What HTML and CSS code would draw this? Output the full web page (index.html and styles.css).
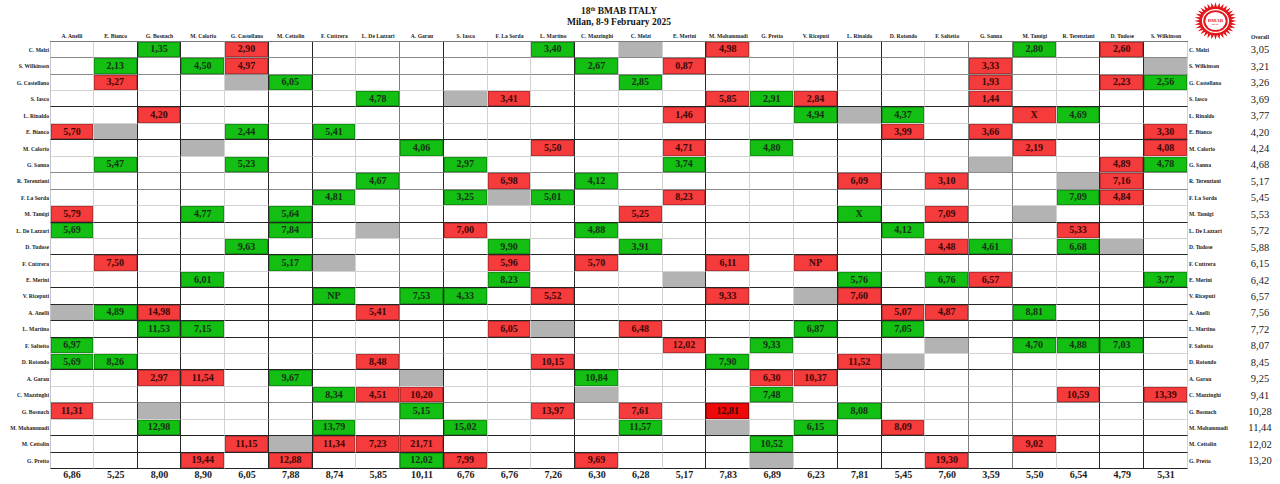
FILE: index.html
```html
<!DOCTYPE html>
<html lang="it">
<head>
<meta charset="utf-8">
<title>18th BMAB ITALY</title>
<link rel="stylesheet" href="styles.css">
</head>
<body>
<div class="top">
  <div class="top-pad"></div>
  <div class="title">
    <div>18<sup>th</sup> BMAB ITALY</div>
    <div>Milan, 8-9 February 2025</div>
  </div>
  <div class="logo-box">
    <svg class="logo" viewBox="0 0 42 42" preserveAspectRatio="none">
      <defs><polygon id="t" points="21,0.3 22.7,6.5 19.3,6.5"/></defs>
      <g fill="#e3161c">
        <use href="#t"/><use href="#t" transform="rotate(11.25 21 21)"/><use href="#t" transform="rotate(22.5 21 21)"/><use href="#t" transform="rotate(33.75 21 21)"/>
        <use href="#t" transform="rotate(45 21 21)"/><use href="#t" transform="rotate(56.25 21 21)"/><use href="#t" transform="rotate(67.5 21 21)"/><use href="#t" transform="rotate(78.75 21 21)"/>
        <use href="#t" transform="rotate(90 21 21)"/><use href="#t" transform="rotate(101.25 21 21)"/><use href="#t" transform="rotate(112.5 21 21)"/><use href="#t" transform="rotate(123.75 21 21)"/>
        <use href="#t" transform="rotate(135 21 21)"/><use href="#t" transform="rotate(146.25 21 21)"/><use href="#t" transform="rotate(157.5 21 21)"/><use href="#t" transform="rotate(168.75 21 21)"/>
        <use href="#t" transform="rotate(180 21 21)"/><use href="#t" transform="rotate(191.25 21 21)"/><use href="#t" transform="rotate(202.5 21 21)"/><use href="#t" transform="rotate(213.75 21 21)"/>
        <use href="#t" transform="rotate(225 21 21)"/><use href="#t" transform="rotate(236.25 21 21)"/><use href="#t" transform="rotate(247.5 21 21)"/><use href="#t" transform="rotate(258.75 21 21)"/>
        <use href="#t" transform="rotate(270 21 21)"/><use href="#t" transform="rotate(281.25 21 21)"/><use href="#t" transform="rotate(292.5 21 21)"/><use href="#t" transform="rotate(303.75 21 21)"/>
        <use href="#t" transform="rotate(315 21 21)"/><use href="#t" transform="rotate(326.25 21 21)"/><use href="#t" transform="rotate(337.5 21 21)"/><use href="#t" transform="rotate(348.75 21 21)"/>
        <circle cx="21" cy="21" r="15.8"/>
      </g>
      <circle cx="21" cy="21" r="12.6" fill="none" stroke="#fff" stroke-width="1.3"/>
      <circle cx="21" cy="21" r="10" fill="#fff"/>
      <text x="21" y="21.6" text-anchor="middle" class="lg1">BMAB</text>
      <text x="21" y="25.6" text-anchor="middle" class="lg2">ITALY</text>
    </svg>
  </div>
</div>
<table class="grid">
<colgroup>
<col class="c-lab">
<col class="c-d"><col class="c-d"><col class="c-d"><col class="c-d"><col class="c-d"><col class="c-d"><col class="c-d"><col class="c-d"><col class="c-d"><col class="c-d"><col class="c-d"><col class="c-d"><col class="c-d">
<col class="c-d"><col class="c-d"><col class="c-d"><col class="c-d"><col class="c-d"><col class="c-d"><col class="c-d"><col class="c-d"><col class="c-d"><col class="c-d"><col class="c-d"><col class="c-d"><col class="c-d">
<col class="c-rl"><col class="c-ov">
</colgroup>
<thead>
<tr><th></th><th class="h">A. Anelli</th><th class="h">E. Bianco</th><th class="h">G. Bosnach</th><th class="h">M. Calorio</th><th class="h">G. Castellano</th><th class="h">M. Cettolin</th><th class="h">F. Cuttrera</th><th class="h">L. De Lazzari</th><th class="h">A. Garau</th><th class="h">S. Iasco</th><th class="h">F. La Sorda</th><th class="h">L. Martino</th><th class="h">C. Mazzinghi</th><th class="h">C. Melzi</th><th class="h">E. Merini</th><th class="h">M. Mohammadi</th><th class="h">G. Pretto</th><th class="h">V. Riceputi</th><th class="h">L. Rinaldo</th><th class="h">D. Rotondo</th><th class="h">F. Saltetto</th><th class="h">G. Sanna</th><th class="h">M. Tamigi</th><th class="h">R. Terenziani</th><th class="h">D. Tudose</th><th class="h">S. Wilkinson</th><th></th><th class="ovh">Overall</th></tr>
</thead>
<tbody>
<tr class="m"><th class="nm">C. Melzi</th>
<td></td><td></td><td class="g">1,35</td><td></td><td class="r">2,90</td>
<td></td><td></td><td></td><td></td><td></td>
<td></td><td class="g">3,40</td><td></td><td class="s"></td><td></td>
<td class="r">4,98</td><td></td><td></td><td></td><td></td>
<td></td><td></td><td class="g">2,80</td><td></td><td class="r">2,60</td><td></td>
<th class="rl">C. Melzi</th><th class="ov">3,05</th></tr>
<tr class="m"><th class="nm">S. Wilkinson</th>
<td></td><td class="g">2,13</td><td></td><td class="g">4,50</td><td class="r">4,97</td>
<td></td><td></td><td></td><td></td><td></td>
<td></td><td></td><td class="g">2,67</td><td></td><td class="r">0,87</td>
<td></td><td></td><td></td><td></td><td></td>
<td></td><td class="r">3,33</td><td></td><td></td><td></td><td class="s"></td>
<th class="rl">S. Wilkinson</th><th class="ov">3,21</th></tr>
<tr><th class="nm">G. Castellano</th>
<td></td><td class="r">3,27</td><td></td><td></td><td class="s"></td>
<td class="g">6,05</td><td></td><td></td><td></td><td></td>
<td></td><td></td><td></td><td class="g">2,85</td><td></td>
<td></td><td></td><td></td><td></td><td></td>
<td></td><td class="r">1,93</td><td></td><td></td><td class="r">2,23</td><td class="g">2,56</td>
<th class="rl">G. Castellano</th><th class="ov">3,26</th></tr>
<tr class="d"><th class="nm">S. Iasco</th>
<td></td><td></td><td></td><td></td><td></td>
<td></td><td></td><td class="g">4,78</td><td></td><td class="s"></td>
<td class="r">3,41</td><td></td><td></td><td></td><td></td>
<td class="r">5,85</td><td class="g">2,91</td><td class="r">2,84</td><td></td><td></td>
<td></td><td class="r">1,44</td><td></td><td></td><td></td><td></td>
<th class="rl">S. Iasco</th><th class="ov">3,69</th></tr>
<tr><th class="nm">L. Rinaldo</th>
<td></td><td></td><td class="r">4,20</td><td></td><td></td>
<td></td><td></td><td></td><td></td><td></td>
<td></td><td></td><td></td><td></td><td class="r">1,46</td>
<td></td><td></td><td class="g">4,94</td><td class="s"></td><td class="g">4,37</td>
<td></td><td></td><td class="r">X</td><td class="g">4,69</td><td></td><td></td>
<th class="rl">L. Rinaldo</th><th class="ov">3,77</th></tr>
<tr class="d"><th class="nm">E. Bianco</th>
<td class="r">5,70</td><td class="s"></td><td></td><td></td><td class="g">2,44</td>
<td></td><td class="g">5,41</td><td></td><td></td><td></td>
<td></td><td></td><td></td><td></td><td></td>
<td></td><td></td><td></td><td></td><td class="r">3,99</td>
<td></td><td class="r">3,66</td><td></td><td></td><td></td><td class="r">3,30</td>
<th class="rl">E. Bianco</th><th class="ov">4,20</th></tr>
<tr><th class="nm">M. Calorio</th>
<td></td><td></td><td></td><td class="s"></td><td></td>
<td></td><td></td><td></td><td class="g">4,06</td><td></td>
<td></td><td class="r">5,50</td><td></td><td></td><td class="r">4,71</td>
<td></td><td class="g">4,80</td><td></td><td></td><td></td>
<td></td><td></td><td class="r">2,19</td><td></td><td></td><td class="r">4,08</td>
<th class="rl">M. Calorio</th><th class="ov">4,24</th></tr>
<tr class="m"><th class="nm">G. Sanna</th>
<td></td><td class="g">5,47</td><td></td><td></td><td class="g">5,23</td>
<td></td><td></td><td></td><td></td><td class="g">2,97</td>
<td></td><td></td><td></td><td></td><td class="g">3,74</td>
<td></td><td></td><td></td><td></td><td></td>
<td></td><td class="s"></td><td></td><td></td><td class="r">4,89</td><td class="g">4,78</td>
<th class="rl">G. Sanna</th><th class="ov">4,68</th></tr>
<tr class="m"><th class="nm">R. Terenziani</th>
<td></td><td></td><td></td><td></td><td></td>
<td></td><td></td><td class="g">4,67</td><td></td><td></td>
<td class="r">6,98</td><td></td><td class="g">4,12</td><td></td><td></td>
<td></td><td></td><td></td><td class="r">6,09</td><td></td>
<td class="r">3,10</td><td></td><td></td><td class="s"></td><td class="r">7,16</td><td></td>
<th class="rl">R. Terenziani</th><th class="ov">5,17</th></tr>
<tr><th class="nm">F. La Sorda</th>
<td></td><td></td><td></td><td></td><td></td>
<td></td><td class="g">4,81</td><td></td><td></td><td class="g">3,25</td>
<td class="s"></td><td class="g">5,01</td><td></td><td></td><td class="r">8,23</td>
<td></td><td></td><td></td><td></td><td></td>
<td></td><td></td><td></td><td class="g">7,09</td><td class="r">4,84</td><td></td>
<th class="rl">F. La Sorda</th><th class="ov">5,45</th></tr>
<tr class="d"><th class="nm">M. Tamigi</th>
<td class="r">5,79</td><td></td><td></td><td class="g">4,77</td><td></td>
<td class="g">5,64</td><td></td><td></td><td></td><td></td>
<td></td><td></td><td></td><td class="r">5,25</td><td></td>
<td></td><td></td><td></td><td class="g">X</td><td></td>
<td class="r">7,09</td><td></td><td class="s"></td><td></td><td></td><td></td>
<th class="rl">M. Tamigi</th><th class="ov">5,53</th></tr>
<tr><th class="nm">L. De Lazzari</th>
<td class="g">5,69</td><td></td><td></td><td></td><td></td>
<td class="g">7,84</td><td></td><td class="s"></td><td></td><td class="r">7,00</td>
<td></td><td></td><td class="g">4,88</td><td></td><td></td>
<td></td><td></td><td></td><td></td><td class="g">4,12</td>
<td></td><td></td><td></td><td class="r">5,33</td><td></td><td></td>
<th class="rl">L. De Lazzari</th><th class="ov">5,72</th></tr>
<tr class="d"><th class="nm">D. Tudose</th>
<td></td><td></td><td></td><td></td><td class="g">9,63</td>
<td></td><td></td><td></td><td></td><td></td>
<td class="g">9,90</td><td></td><td></td><td class="g">3,91</td><td></td>
<td></td><td></td><td></td><td></td><td></td>
<td class="r">4,48</td><td class="g">4,61</td><td></td><td class="g">6,68</td><td class="s"></td><td></td>
<th class="rl">D. Tudose</th><th class="ov">5,88</th></tr>
<tr><th class="nm">F. Cuttrera</th>
<td></td><td class="r">7,50</td><td></td><td></td><td></td>
<td class="g">5,17</td><td class="s"></td><td></td><td></td><td></td>
<td class="r">5,96</td><td></td><td class="r">5,70</td><td></td><td></td>
<td class="r">6,11</td><td></td><td class="r">NP</td><td></td><td></td>
<td></td><td></td><td></td><td></td><td></td><td></td>
<th class="rl">F. Cuttrera</th><th class="ov">6,15</th></tr>
<tr class="d"><th class="nm">E. Merini</th>
<td></td><td></td><td></td><td class="g">6,01</td><td></td>
<td></td><td></td><td></td><td></td><td></td>
<td class="g">8,23</td><td></td><td></td><td></td><td class="s"></td>
<td></td><td></td><td></td><td class="g">5,76</td><td></td>
<td class="g">6,76</td><td class="r">6,57</td><td></td><td></td><td></td><td class="g">3,77</td>
<th class="rl">E. Merini</th><th class="ov">6,42</th></tr>
<tr class="d"><th class="nm">V. Riceputi</th>
<td></td><td></td><td></td><td></td><td></td>
<td></td><td class="g">NP</td><td></td><td class="g">7,53</td><td class="g">4,33</td>
<td></td><td class="r">5,52</td><td></td><td></td><td></td>
<td class="r">9,33</td><td></td><td class="s"></td><td class="r">7,60</td><td></td>
<td></td><td></td><td></td><td></td><td></td><td></td>
<th class="rl">V. Riceputi</th><th class="ov">6,57</th></tr>
<tr class="d"><th class="nm">A. Anelli</th>
<td class="s"></td><td class="g">4,89</td><td class="r">14,98</td><td></td><td></td>
<td></td><td></td><td class="r">5,41</td><td></td><td></td>
<td></td><td></td><td></td><td></td><td></td>
<td></td><td></td><td></td><td></td><td class="r">5,07</td>
<td class="r">4,87</td><td></td><td class="g">8,81</td><td></td><td></td><td></td>
<th class="rl">A. Anelli</th><th class="ov">7,56</th></tr>
<tr class="d"><th class="nm">L. Martino</th>
<td></td><td></td><td class="g">11,53</td><td class="g">7,15</td><td></td>
<td></td><td></td><td></td><td></td><td></td>
<td class="r">6,05</td><td class="s"></td><td></td><td class="r">6,48</td><td></td>
<td></td><td></td><td class="g">6,87</td><td></td><td class="g">7,05</td>
<td></td><td></td><td></td><td></td><td></td><td></td>
<th class="rl">L. Martino</th><th class="ov">7,72</th></tr>
<tr><th class="nm">F. Saltetto</th>
<td class="g">6,97</td><td></td><td></td><td></td><td></td>
<td></td><td></td><td></td><td></td><td></td>
<td></td><td></td><td></td><td></td><td class="r">12,02</td>
<td></td><td class="g">9,33</td><td></td><td></td><td></td>
<td class="s"></td><td></td><td class="g">4,70</td><td class="g">4,88</td><td class="g">7,03</td><td></td>
<th class="rl">F. Saltetto</th><th class="ov">8,07</th></tr>
<tr class="d"><th class="nm">D. Rotondo</th>
<td class="g">5,69</td><td class="g">8,26</td><td></td><td></td><td></td>
<td></td><td></td><td class="r">8,48</td><td></td><td></td>
<td></td><td class="r">10,15</td><td></td><td></td><td></td>
<td class="g">7,90</td><td></td><td></td><td class="r">11,52</td><td class="s"></td>
<td></td><td></td><td></td><td></td><td></td><td></td>
<th class="rl">D. Rotondo</th><th class="ov">8,45</th></tr>
<tr><th class="nm">A. Garau</th>
<td></td><td></td><td class="r">2,97</td><td class="r">11,54</td><td></td>
<td class="g">9,67</td><td></td><td></td><td class="s"></td><td></td>
<td></td><td></td><td class="g">10,84</td><td></td><td></td>
<td></td><td class="r">6,30</td><td class="r">10,37</td><td></td><td></td>
<td></td><td></td><td></td><td></td><td></td><td></td>
<th class="rl">A. Garau</th><th class="ov">9,25</th></tr>
<tr class="m"><th class="nm">C. Mazzinghi</th>
<td></td><td></td><td></td><td></td><td></td>
<td></td><td class="g">8,34</td><td class="r">4,51</td><td class="r">10,20</td><td></td>
<td></td><td></td><td class="s"></td><td></td><td></td>
<td></td><td class="g">7,48</td><td></td><td></td><td></td>
<td></td><td></td><td></td><td class="r">10,59</td><td></td><td class="r">13,39</td>
<th class="rl">C. Mazzinghi</th><th class="ov">9,41</th></tr>
<tr><th class="nm">G. Bosnach</th>
<td class="r">11,31</td><td></td><td class="s"></td><td></td><td></td>
<td></td><td></td><td></td><td class="g">5,15</td><td></td>
<td></td><td class="r">13,97</td><td></td><td class="r">7,61</td><td></td>
<td class="rr">12,81</td><td></td><td></td><td class="g">8,08</td><td></td>
<td></td><td></td><td></td><td></td><td></td><td></td>
<th class="rl">G. Bosnach</th><th class="ov">10,28</th></tr>
<tr class="d"><th class="nm">M. Mohammadi</th>
<td></td><td></td><td class="g">12,98</td><td></td><td></td>
<td></td><td class="g">13,79</td><td></td><td></td><td class="g">15,02</td>
<td></td><td></td><td></td><td class="g">11,57</td><td></td>
<td class="s"></td><td></td><td class="g">6,15</td><td></td><td class="r">8,09</td>
<td></td><td></td><td></td><td></td><td></td><td></td>
<th class="rl">M. Mohammadi</th><th class="ov">11,44</th></tr>
<tr class="d"><th class="nm">M. Cettolin</th>
<td></td><td></td><td></td><td></td><td class="r">11,15</td>
<td class="s"></td><td class="r">11,34</td><td class="r">7,23</td><td class="r">21,71</td><td></td>
<td></td><td></td><td></td><td></td><td></td>
<td></td><td class="g">10,52</td><td></td><td></td><td></td>
<td></td><td></td><td class="r">9,02</td><td></td><td></td><td></td>
<th class="rl">M. Cettolin</th><th class="ov">12,02</th></tr>
<tr class="d"><th class="nm">G. Pretto</th>
<td></td><td></td><td></td><td class="r">19,44</td><td></td>
<td class="r">12,88</td><td></td><td></td><td class="g">12,02</td><td class="r">7,99</td>
<td></td><td></td><td class="r">9,69</td><td></td><td></td>
<td></td><td class="s"></td><td></td><td></td><td></td>
<td class="r">19,30</td><td></td><td></td><td></td><td></td><td></td>
<th class="rl">G. Pretto</th><th class="ov">13,20</th></tr>
</tbody>
<tfoot>
<tr><th></th>
<td>6,86</td><td>5,25</td><td>8,00</td><td>8,90</td><td>6,05</td><td>7,88</td><td>8,74</td><td>5,85</td><td>10,11</td><td>6,76</td><td>6,76</td><td>7,26</td><td>6,30</td>
<td>6,28</td><td>5,17</td><td>7,83</td><td>6,89</td><td>6,23</td><td>7,81</td><td>5,45</td><td>7,60</td><td>3,59</td><td>5,50</td><td>6,54</td><td>4,79</td><td>5,31</td>
<th></th><th></th></tr>
</tfoot>
</table>
</body>
</html>
```

FILE: styles.css
```css
* { box-sizing: border-box; }
html, body { margin: 0; padding: 0; background: #fff; }
body {
  width: 1280px;
  height: 484px;
  overflow: hidden;
  font-family: "Liberation Serif", "DejaVu Serif", serif;
  color: #1c1c1c;
}

/* header */
.top { display: flex; height: 31px; }
.top-pad { flex: none; width: 50px; }
.title {
  flex: none;
  width: 1138px;
  text-align: center;
  font-weight: bold;
  font-size: 9.5px;
  line-height: 10.5px;
  padding-top: 6px;
  color: #151515;
}
.title sup { font-size: 5.5px; line-height: 0; vertical-align: 3px; }
.logo-box { flex: none; width: 92px; padding: 2px 0 0 6px; }
.logo { display: block; width: 43px; height: 38px; }
.lg1 { font-family: "Liberation Serif", serif; font-weight: bold; font-size: 5px; fill: #e3161c; }
.lg2 { font-family: "Liberation Sans", sans-serif; font-weight: bold; font-size: 2.6px; fill: #e3161c; }

/* grid */
.grid {
  width: 1280px;
  table-layout: fixed;
  border-collapse: separate;
  border-spacing: 0;
}
.c-lab { width: 50px; }
.c-d { width: 43.77px; }
.c-rl { width: 52px; }
.c-ov { width: 40px; }
.grid th, .grid td { padding: 0; }

.grid thead tr { height: 10.7px; }
.grid thead th {
  font-size: 5.6px;
  font-weight: bold;
  text-align: center;
  vertical-align: bottom;
  padding-bottom: 2px;
  white-space: nowrap;
  overflow: hidden;
}
.grid thead th.h { border-bottom: 1px solid #7a7a7a; }

.grid tbody tr { height: 16.45px; }
.grid tbody th.nm {
  font-size: 5.6px;
  font-weight: bold;
  text-align: right;
  padding-right: 1px;
  white-space: nowrap;
}
.grid tbody th.rl {
  font-size: 5.6px;
  font-weight: bold;
  text-align: left;
  padding-left: 1px;
  white-space: nowrap;
}
.grid tbody th.ov {
  font-size: 10.5px;
  font-weight: normal;
  text-align: center;
  color: #1a1a1a;
}
.grid tbody td {
  border-right: 1px solid #d2d2d2;
  border-bottom: 1px solid #d2d2d2;
  text-align: center;
  vertical-align: middle;
  font-size: 10px;
  font-weight: bold;
  line-height: 1;
}
.grid tbody td:nth-child(2) { border-left: 1px solid #c4c4c4; }

/* heavy column separators */
.grid tbody td:nth-child(3),
.grid tbody td:nth-child(4),
.grid tbody td:nth-child(6),
.grid tbody td:nth-child(7),
.grid tbody td:nth-child(10),
.grid tbody td:nth-child(13),
.grid tbody td:nth-child(16),
.grid tbody td:nth-child(19),
.grid tbody td:nth-child(20),
.grid tbody td:nth-child(25),
.grid tbody td:nth-child(26) { border-right-color: #262626; }
.grid tbody td:nth-child(9),
.grid tbody td:nth-child(22),
.grid tbody td:nth-child(23) { border-right-color: #7d7d7d; }

/* heavy row separators */
.grid tbody tr.d td { border-bottom-color: #262626; }
.grid tbody tr.m td { border-bottom-color: #8a8a8a; }

/* result cells */
.grid tbody td.g {
  background: #14bf14;
  color: #133113;
  box-shadow: inset 0 0 0 1px rgba(0, 0, 0, 0.22);
}
.grid tbody td.r {
  background: #f53b3b;
  color: #3d0707;
  box-shadow: inset 0 0 0 1px rgba(0, 0, 0, 0.22);
}
.grid tbody td.rr {
  background: #ee0a0a;
  color: #3d0505;
  box-shadow: inset 0 0 0 1px rgba(0, 0, 0, 0.3);
}
.grid tbody td.s { background: #b3b3b3; }

/* column averages */
.grid tfoot tr { height: 14.6px; }
.grid tfoot td {
  text-align: center;
  vertical-align: top;
  padding-top: 1px;
  font-size: 10px;
  font-weight: bold;
  line-height: 10px;
}
```
